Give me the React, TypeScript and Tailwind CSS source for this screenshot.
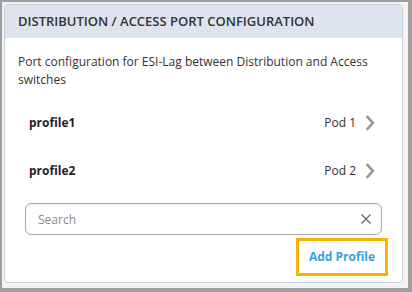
import React from "react";

function Chevron() {
  return (
    <svg width="10" height="16" viewBox="0 0 10 16" className="ml-[9px]">
      <path d="M2.5 2 L8 8 L2.5 14" fill="none" stroke="#9a9a9a" strokeWidth="2.6" strokeLinecap="square" />
    </svg>
  );
}

export default function App() {
  const rows = [
    { name: "profile1", pod: "Pod 1" },
    { name: "profile2", pod: "Pod 2" },
  ];
  return (
    <div
      className="w-[412px] h-[292px] bg-[#9f9f9f] pt-[2px] pl-[2px] pr-[4px] pb-[4px]"
      style={{ fontFamily: '"Open Sans", "Liberation Sans", sans-serif' }}
    >
      <div className="w-full h-full bg-[#f3f3f3] pt-[2px] pl-[2px] pr-[5px] pb-[5px]">
        <div className="w-full h-full bg-white border border-[#c8d3de] rounded-[4px] overflow-hidden flex flex-col">
          <div className="h-[33px] bg-[#dde4ec] flex items-center px-[13px] pt-[1px] text-[13px] font-semibold text-[#333]">
            DISTRIBUTION / ACCESS PORT CONFIGURATION
          </div>
          <div className="pt-[15px] px-[13px] text-[12px] leading-[18px] text-[#333]">
            Port configuration for ESI-Lag between Distribution and Access switches
          </div>
          <div className="mt-[10px] flex flex-col pl-[24px] pr-[27px]">
            {rows.map((r) => (
              <div key={r.name} className="h-[48px] flex items-center justify-between">
                <span className="text-[12px] font-bold text-[#222]">{r.name}</span>
                <span className="flex items-center text-[12px] text-[#333]">
                  {r.pod}
                  <Chevron />
                </span>
              </div>
            ))}
          </div>
          <div className="mt-[8px] pl-[20px] pr-[20px]">
            <div className="h-[32px] border border-[#a9a9a9] rounded-[6px] flex items-center pl-[12px] pr-[9px] shadow-[inset_0_1px_2px_rgba(0,0,0,0.06)]">
              <span className="flex-1 text-[12px] text-[#8a8a8a] pt-[1px]">Search</span>
              <svg width="12" height="12" viewBox="0 0 12 12">
                <path d="M1.5 1.5 L10.5 10.5 M10.5 1.5 L1.5 10.5" stroke="#666" strokeWidth="1.2" />
              </svg>
            </div>
          </div>
          <div className="flex justify-end pr-[14px] mt-[3px]">
            <div className="w-[92px] h-[38px] border-[3px] border-[#f5b400] flex items-center justify-center text-[12px] font-bold text-[#3a9fe0]">
              Add Profile
            </div>
          </div>
        </div>
      </div>
    </div>
  );
}
